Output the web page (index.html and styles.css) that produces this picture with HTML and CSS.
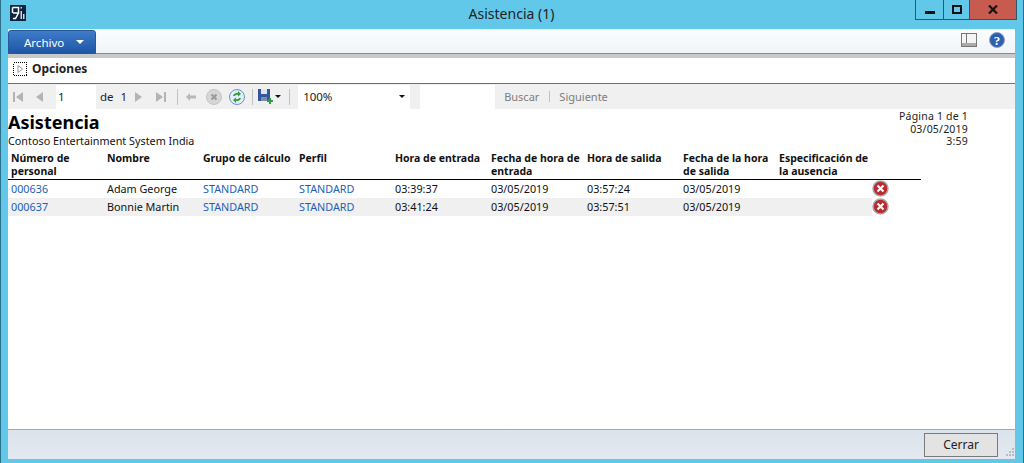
FILE: index.html
```html
<!DOCTYPE html>
<html lang="es">
<head>
    <meta charset="UTF-8">
    <meta name="viewport" content="width=device-width, initial-scale=1.0">
    <title>Asistencia (1)</title>
    <link rel="stylesheet" href="styles.css">
</head>
<body>
    <div class="titlebar">
        <svg class="app-icon" width="16" height="16" viewBox="0 0 16 16">
            <rect width="16" height="16" fill="#0d2440"/>
            <path d="M2.500 2.500h6v5.500h-5.500M8.500 8l-3 5.500H3M2.500 2.500v5.500" fill="none" stroke="#fff" stroke-width="1.500"/>
            <path d="M10.500 2h1.500v1.500h-1.500zM10.500 6h1.500v8h-1.500zM13 9h1.500v5H13z" fill="#cfd8e3"/>
        </svg>
        <span class="window-title">Asistencia (1)</span>
        <div class="window-controls">
            <div class="ctl ctl-min"><span class="min-glyph"></span></div>
            <div class="ctl ctl-max"><span class="max-glyph"></span></div>
            <div class="ctl ctl-close">
                <svg width="10" height="9" viewBox="0 0 10 9"><path d="M1 .5l8 8M9 .5l-8 8" stroke="#1a1410" stroke-width="2.200"/></svg>
            </div>
        </div>
    </div>

    <div class="window">
        <div class="ribbon">
            <div class="file-tab">Archivo <span class="caret caret-white"></span></div>
            <div class="ribbon-icons">
                <svg width="16" height="14" viewBox="0 0 16 14">
                    <rect x=".5" y=".5" width="15" height="13" fill="#f4f4f4" stroke="#777"/>
                    <rect x="1" y="10" width="14" height="3" fill="#aaa"/>
                    <path d="M5.500 1v9" stroke="#777"/>
                </svg>
                <svg width="16" height="16" viewBox="0 0 16 16">
                    <circle cx="8" cy="8" r="7.500" fill="#2f5fb3" stroke="#8da3c4"/>
                    <text x="8" y="12.500" text-anchor="middle" class="help-mark">?</text>
                </svg>
            </div>
        </div>

        <div class="options">
            <svg width="14" height="14" viewBox="0 0 14 14">
                <rect x=".5" y=".5" width="13" height="13" fill="#fff" stroke="#000" stroke-dasharray="1 1" shape-rendering="crispEdges"/>
                <path d="M5 3.500l4.500 3.500L5 10.500z" fill="#fff" stroke="#999"/>
            </svg>
            <b>Opciones</b>
        </div>

        <div class="toolbar">
            <svg class="tool" width="12" height="12" viewBox="0 0 12 12"><path d="M1 1h2v10H1zM11 1v10L4 6z" fill="#b4b4b4"/></svg>
            <svg class="tool tool-prev" width="10" height="12" viewBox="0 0 10 12"><path d="M8 1v10L1 6z" fill="#b4b4b4"/></svg>
            <div class="page-input">1</div>
            <span class="page-of">de</span>
            <span class="page-total">1</span>
            <svg class="tool tool-next" width="10" height="12" viewBox="0 0 10 12"><path d="M2 1v10l7-5z" fill="#b4b4b4"/></svg>
            <svg class="tool tool-last" width="12" height="12" viewBox="0 0 12 12"><path d="M1 1v10l7-5zM9 1h2v10H9z" fill="#b4b4b4"/></svg>
            <span class="sep sep-a"></span>
            <svg class="tool" width="10" height="10" viewBox="0 0 10 10"><path d="M0 5l4-4v2.500h6v3H4V9z" fill="#b8b8b8"/></svg>
            <svg class="tool tool-stop" width="16" height="16" viewBox="0 0 16 16">
                <circle cx="8" cy="8" r="7.500" fill="#d6d6d6" stroke="#c4c4c4"/>
                <path d="M5.500 5.500l5 5M10.500 5.500l-5 5" stroke="#9a9a9a" stroke-width="2"/>
            </svg>
            <svg class="tool tool-refresh" width="16" height="16" viewBox="0 0 16 16">
                <circle cx="8" cy="8" r="7.500" fill="#e3eefa" stroke="#6d93c9"/>
                <path d="M4 7a4 4 0 0 1 5-3V2l3 3-3 2.500V6a2.500 2.500 0 0 0-3 1z" fill="#3d9a3a"/>
                <path d="M12 9a4 4 0 0 1-5 3v2l-3-3 3-2.500V10a2.500 2.500 0 0 0 3-1z" fill="#3d9a3a"/>
            </svg>
            <span class="sep sep-b"></span>
            <svg class="tool tool-save" width="15" height="15" viewBox="0 0 15 15">
                <path d="M0 0h12v12H0z" fill="#34579f"/>
                <path d="M3 0h6v5H3z" fill="#dfe6f2"/>
                <path d="M3 8h6v4H3z" fill="#7f8ea8"/>
                <path d="M11 9h2v2h2v2h-2v2h-2v-2H9v-2h2z" fill="#2f9e44"/>
            </svg>
            <span class="caret caret-dark caret-save"></span>
            <span class="sep sep-c"></span>
            <div class="zoom-box">100%<span class="caret caret-dark"></span></div>
            <div class="find-box"></div>
            <span class="find-link">Buscar</span>
            <span class="find-sep"></span>
            <span class="find-link">Siguiente</span>
        </div>

        <div class="report">
            <div class="report-head">
                <div>
                    <h1>Asistencia</h1>
                    <div class="company">Contoso Entertainment System India</div>
                </div>
                <div class="page-info">Página 1 de 1<br>03/05/2019<br>3:59</div>
            </div>
            <table>
                <thead>
                    <tr>
                        <th>Número de personal</th>
                        <th>Nombre</th>
                        <th>Grupo de cálculo</th>
                        <th>Perfil</th>
                        <th>Hora de entrada</th>
                        <th>Fecha de hora de entrada</th>
                        <th>Hora de salida</th>
                        <th>Fecha de la hora de salida</th>
                        <th>Especificación de la ausencia</th>
                        <th class="col-icon"></th>
                    </tr>
                </thead>
                <tbody>
                    <tr>
                        <td><a>000636</a></td>
                        <td>Adam George</td>
                        <td><a>STANDARD</a></td>
                        <td><a>STANDARD</a></td>
                        <td>03:39:37</td>
                        <td>03/05/2019</td>
                        <td>03:57:24</td>
                        <td>03/05/2019</td>
                        <td></td>
                        <td class="col-icon">
                            <svg class="err" width="17" height="17" viewBox="0 0 17 17">
                                <circle cx="8.500" cy="8.500" r="7.500" fill="#b92b30" stroke="#a9a9a9" stroke-width="1.500"/>
                                <path d="M5.500 5.500l6 6M11.500 5.500l-6 6" stroke="#fff" stroke-width="2.200"/>
                            </svg>
                        </td>
                    </tr>
                    <tr class="alt">
                        <td><a>000637</a></td>
                        <td>Bonnie Martin</td>
                        <td><a>STANDARD</a></td>
                        <td><a>STANDARD</a></td>
                        <td>03:41:24</td>
                        <td>03/05/2019</td>
                        <td>03:57:51</td>
                        <td>03/05/2019</td>
                        <td></td>
                        <td class="col-icon">
                            <svg class="err" width="17" height="17" viewBox="0 0 17 17">
                                <circle cx="8.500" cy="8.500" r="7.500" fill="#b92b30" stroke="#a9a9a9" stroke-width="1.500"/>
                                <path d="M5.500 5.500l6 6M11.500 5.500l-6 6" stroke="#fff" stroke-width="2.200"/>
                            </svg>
                        </td>
                    </tr>
                </tbody>
            </table>
        </div>

        <div class="footer">
            <button class="close-btn">Cerrar</button>
            <svg class="grip" width="10" height="10" viewBox="0 0 10 10">
                <path d="M8 0h2v2H8zM5 3h2v2H5zM8 3h2v2H8zM2 6h2v2H2zM5 6h2v2H5zM8 6h2v2H8z" fill="#b4bcc4"/>
            </svg>
        </div>
    </div>
</body>
</html>
```

FILE: styles.css
```css
* {
    box-sizing: border-box;
}
html, body {
    height: 100%;
}
body {
    margin: 0;
    padding: 0 8px 4px 7px;
    display: flex;
    flex-direction: column;
    overflow: hidden;
    background-color: #62c8e9;
    border-left: 1px solid #2a6f8a;
    border-right: 1px solid #2a6f8a;
    font-family: "Noto Sans", "Open Sans", sans-serif;
    font-size: 10.8px;
    color: #111;
}
.titlebar {
    height: 29px;
    flex: none;
    display: flex;
    align-items: flex-start;
    position: relative;
}
.app-icon {
    margin: 5px 0 0 2px;
}
.window-title {
    position: absolute;
    left: 0;
    right: 0;
    top: 5px;
    text-align: center;
    font-size: 14px;
    line-height: 18px;
    color: #222;
}
.window-controls {
    position: absolute;
    top: 0;
    right: -2px;
    display: flex;
    height: 20px;
    border: 1px solid #2a5a6c;
    border-top: none;
}
.ctl {
    display: flex;
    align-items: center;
    justify-content: center;
    height: 19px;
}
.ctl-min {
    width: 28px;
    border-right: 1px solid #2a5a6c;
}
.ctl-max {
    width: 26px;
    border-right: 1px solid #2a5a6c;
}
.ctl-close {
    width: 46px;
    background: #c75b50;
}
.min-glyph {
    width: 10px;
    height: 3px;
    margin-top: 5px;
    background: #111;
}
.max-glyph {
    width: 10px;
    height: 9px;
    border: 2px solid #111;
}
.window {
    flex: 1;
    display: flex;
    flex-direction: column;
    min-height: 0;
    background: #fff;
}
.ribbon {
    height: 29px;
    flex: none;
    display: flex;
    justify-content: space-between;
    background: linear-gradient(#fafcfd, #f1f4f7);
    border-bottom: 4px solid #c9c9c9;
    border-top: 1px solid #e8f2f6;
    box-shadow: inset 0 -1px 0 #8a8a8a;
}
.file-tab {
    width: 88px;
    height: 24px;
    padding-left: 15px;
    display: flex;
    align-items: center;
    gap: 12px;
    color: #fff;
    font-size: 11.5px;
    background: linear-gradient(#3f7cc9, #1e56a6);
    border: 1px solid #2b5797;
    border-radius: 3px 3px 0 0;
}
.ribbon-icons {
    display: flex;
    align-items: center;
    gap: 12px;
    padding: 0 10px 4px 0;
}
.help-mark {
    font-size: 13px;
    font-weight: bold;
    fill: #fff;
    font-family: "Liberation Serif", serif;
}
.caret {
    display: inline-block;
    width: 0;
    height: 0;
    border-left: 3.5px solid transparent;
    border-right: 3.5px solid transparent;
}
.caret-white {
    border-left-width: 4px;
    border-right-width: 4px;
    border-top: 4px solid #fff;
}
.caret-dark {
    border-top: 3px solid #111;
}
.options {
    height: 26px;
    flex: none;
    display: flex;
    align-items: center;
    gap: 5px;
    padding: 0 0 4px 5px;
    font-size: 12px;
    border-bottom: 1px solid #6f6f6f;
}
.options b {
    color: #222;
}
.toolbar {
    height: 25px;
    flex: none;
    display: flex;
    align-items: center;
    background: #f0f0f0;
    color: #222;
    font-size: 11.5px;
}
.tool {
    flex: none;
    margin-left: 4px;
}
.tool-prev {
    margin-left: 11px;
}
.page-input {
    width: 40px;
    height: 24px;
    margin-left: 11px;
    padding-left: 2px;
    line-height: 24px;
    background: #fff;
}
.page-of {
    margin-left: 4px;
}
.page-total {
    margin-left: 7px;
}
.tool-next {
    margin-left: 6px;
}
.tool-last {
    margin-left: 12px;
}
.sep {
    width: 1px;
    height: 16px;
    background: #c2c2c2;
}
.sep-a {
    margin: 0 4px 0 10px;
}
.tool-stop {
    margin-left: 10px;
}
.tool-refresh {
    margin-left: 7px;
}
.sep-b {
    margin-left: 7px;
}
.tool-save {
    margin-left: 5px;
}
.caret-save {
    margin-left: 2px;
}
.sep-c {
    margin-left: 8px;
}
.zoom-box {
    width: 112px;
    height: 24px;
    margin-left: 8px;
    padding: 0 5px;
    display: flex;
    align-items: center;
    justify-content: space-between;
    background: #fff;
}
.find-box {
    width: 75px;
    height: 24px;
    margin-left: 10px;
    background: #fff;
}
.find-link {
    margin-left: 9px;
    color: #7d7d7d;
    font-size: 11px;
}
.find-sep {
    width: 1px;
    height: 11px;
    margin-left: 10px;
    background: #c2c2c2;
}
.report {
    flex: 1;
    min-height: 0;
    background: #fff;
}
.report-head {
    display: flex;
    justify-content: space-between;
    height: 43px;
    padding-right: 47px;
}
h1 {
    margin: 2px 0 0 0;
    font-size: 18px;
    line-height: 22px;
    color: #000;
}
.company {
    margin-top: 1px;
    line-height: 14px;
}
.page-info {
    margin-top: 1px;
    text-align: right;
    font-size: 10.5px;
    letter-spacing: .2px;
    line-height: 12.5px;
    color: #222;
}
table {
    width: 913px;
    border-collapse: collapse;
    table-layout: fixed;
}
th, td {
    width: 96px;
    padding: 0 0 0 3px;
    text-align: left;
    vertical-align: top;
}
th {
    padding-bottom: 1px;
    line-height: 13px;
    font-size: 10.5px;
    font-weight: bold;
    border-bottom: 1px solid #000;
}
td {
    height: 18px;
    line-height: 18px;
}
.col-icon {
    width: 49px;
    padding: 0;
}
.alt td {
    background: #f0f0f0;
}
.alt .col-icon {
    background: #fff;
}
a {
    color: #1c61b8;
}
.err {
    display: block;
}
.footer {
    height: 30px;
    flex: none;
    display: flex;
    justify-content: flex-end;
    align-items: center;
    gap: 6px;
    padding-right: 1px;
    background: linear-gradient(#dbe3ec, #e3e9f0);
    border-top: 1px solid #a0aab4;
}
.close-btn {
    width: 74px;
    height: 24px;
    font: inherit;
    font-size: 12px;
    color: #222;
    background: #e3e3e3;
    border: 1px solid #7a7a7a;
}
.grip {
    align-self: flex-end;
    margin-bottom: 1px;
}
```
